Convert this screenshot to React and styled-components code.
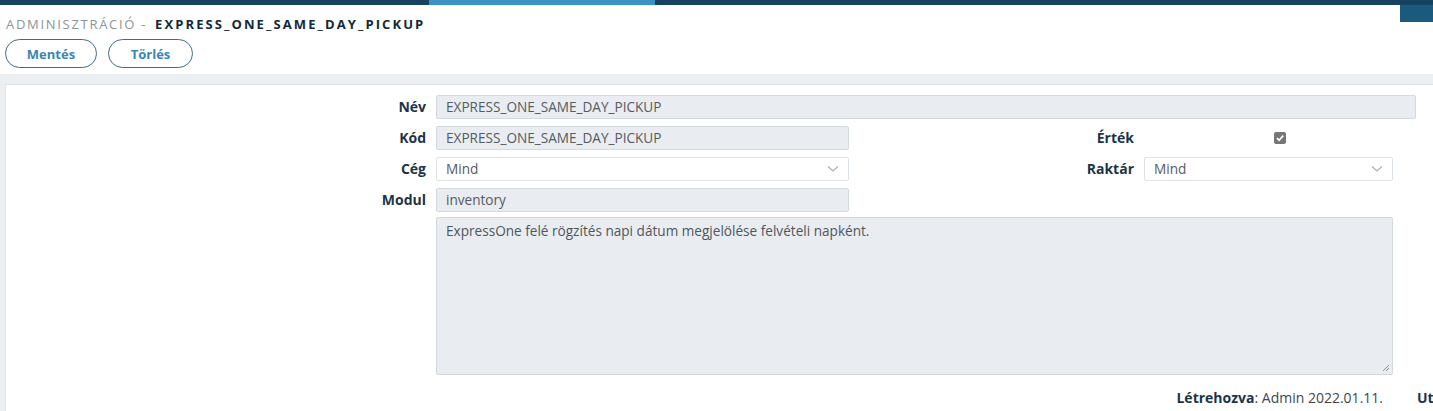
import React from 'react';
import styled, { createGlobalStyle } from 'styled-components';

const GlobalStyle = createGlobalStyle`
  html, body {
    margin: 0;
    padding: 0;
    background: #ffffff;
    overflow: hidden;
  }
  body {
    font-family: 'Open Sans', 'Noto Sans', sans-serif;
    color: #1d3447;
  }
`;

const Page = styled.div`
  position: relative;
  width: 1433px;
  height: 411px;
  overflow: hidden;
`;

const TopBar = styled.div`
  height: 5px;
  background: #15435f;
  display: flex;
`;

const TopBarActive = styled.div`
  margin-left: 429px;
  width: 226px;
  background: #3a93c3;
`;

// little block sitting in the right corner under the bar
const CornerTab = styled.div`
  position: absolute;
  top: 5px;
  right: 0;
  width: 33px;
  height: 17px;
  background: #1b5a7f;
`;

const Header = styled.div`
  padding: 11px 5px 6px 5px;
`;

const Title = styled.div`
  font-size: 13px;
  line-height: 16px;
  display: flex;
  align-items: baseline;
  padding-left: 1px;
`;

const TitleSection = styled.span`
  color: #8b949b;
  letter-spacing: 1.7px;
  margin-right: 8px;
`;

const TitleName = styled.span`
  color: #12293a;
  font-weight: 700;
  letter-spacing: 2.1px;
`;

const Toolbar = styled.div`
  display: flex;
  gap: 11px;
  margin-top: 7px;
`;

const PillButton = styled.button`
  height: 29px;
  width: ${(p) => p.$width}px;
  border: 1px solid #3f6c82;
  border-radius: 15px;
  background: #ffffff;
  color: #3a86b4;
  font-family: 'Open Sans', sans-serif;
  font-weight: 700;
  font-size: 13px;
  padding: 0;
  cursor: pointer;
`;

const Content = styled.div`
  background: #eceff2;
  padding: 10px 0 0 5px;
  height: 100%;
`;

const Panel = styled.div`
  background: #ffffff;
  border: 1px solid #dfe4e8;
  border-right: none;
  padding: 10px 0 0 0;
  height: 330px;
`;

const FormGrid = styled.div`
  display: grid;
  grid-template-columns: 420px 413px 275px 249px 13px;
  column-gap: 10px;
  row-gap: 7px;
  align-items: center;
`;

const Label = styled.label`
  grid-column: ${(p) => p.$col || 1};
  grid-row: ${(p) => p.$row};
  text-align: right;
  font-size: 14px;
  font-weight: 700;
  color: #1d3447;
  line-height: 24px;
`;

const Field = styled.div`
  grid-column: ${(p) => p.$span};
  grid-row: ${(p) => p.$row};
  height: 24px;
  box-sizing: border-box;
  border: 1px solid ${(p) => (p.$select ? '#dde2e6' : '#d3d9de')};
  border-radius: 2px;
  background: ${(p) => (p.$select ? '#ffffff' : '#e9edf1')};
  color: #555b61;
  font-size: 13.6px;
  line-height: 22px;
  padding: 0 9px;
  display: flex;
  align-items: center;
  justify-content: space-between;
  white-space: nowrap;
`;

const TextArea = styled.div`
  grid-column: 2 / 5;
  grid-row: 5;
  margin-top: -2px;
  height: 158px;
  box-sizing: border-box;
  border: 1px solid #d3d9de;
  border-radius: 2px;
  background: #e9edf1;
  color: #4f565c;
  font-size: 13.6px;
  line-height: 20px;
  padding: 3px 9px;
  position: relative;
`;

const Grip = styled.svg`
  position: absolute;
  right: 2px;
  bottom: 2px;
`;

const CheckCell = styled.div`
  grid-column: 4;
  grid-row: 2;
  display: flex;
  align-items: center;
  padding-left: 130px;
`;

const CheckBox = styled.span`
  width: 12px;
  height: 12px;
  border-radius: 2px;
  background: #767676;
  display: flex;
  align-items: center;
  justify-content: center;
`;

const Footer = styled.div`
  grid-column: 2 / 6;
  grid-row: 6;
  display: flex;
  justify-content: flex-end;
  gap: 34px;
  margin-top: 6px;
  font-size: 14px;
  color: #3f474e;
  white-space: nowrap;
  margin-right: -17px;
`;

const Meta = styled.span`
  b {
    color: #1d3447;
  }
`;

const MetaClipped = styled.span`
  width: 16px;
  overflow: visible;
  b {
    color: #1d3447;
  }
`;

const Chevron = () => (
  <svg width="12" height="8" viewBox="0 0 12 8">
    <path d="M1 1.5 L6 6 L11 1.5" fill="none" stroke="#a8b3bc" strokeWidth="1.3" />
  </svg>
);

export default function App() {
  return (
    <Page>
      <GlobalStyle />
      <TopBar>
        <TopBarActive />
      </TopBar>
      <CornerTab />
      <Header>
        <Title>
          <TitleSection>ADMINISZTRÁCIÓ -</TitleSection>
          <TitleName>EXPRESS_ONE_SAME_DAY_PICKUP</TitleName>
        </Title>
        <Toolbar>
          <PillButton $width={92}>Mentés</PillButton>
          <PillButton $width={85}>Törlés</PillButton>
        </Toolbar>
      </Header>
      <Content>
        <Panel>
          <FormGrid>
            <Label $row={1}>Név</Label>
            <Field $row={1} $span="2 / 6">EXPRESS_ONE_SAME_DAY_PICKUP</Field>

            <Label $row={2}>Kód</Label>
            <Field $row={2} $span="2">EXPRESS_ONE_SAME_DAY_PICKUP</Field>
            <Label $row={2} $col={3}>Érték</Label>
            <CheckCell>
              <CheckBox>
                <svg width="10" height="10" viewBox="0 0 10 10">
                  <path d="M2 5.2 L4.1 7.3 L8.2 2.6" fill="none" stroke="#ffffff" strokeWidth="1.7" />
                </svg>
              </CheckBox>
            </CheckCell>

            <Label $row={3}>Cég</Label>
            <Field $row={3} $span="2" $select>
              Mind
              <Chevron />
            </Field>
            <Label $row={3} $col={3}>Raktár</Label>
            <Field $row={3} $span="4" $select>
              Mind
              <Chevron />
            </Field>

            <Label $row={4}>Modul</Label>
            <Field $row={4} $span="2">inventory</Field>

            <TextArea>
              ExpressOne felé rögzítés napi dátum megjelölése felvételi napként.
              <Grip width="9" height="9" viewBox="0 0 9 9">
                <path d="M8 2 L2 8 M8 5 L5 8" stroke="#8a8f94" strokeWidth="1" />
              </Grip>
            </TextArea>

            <Footer>
              <Meta>
                <b>Létrehozva</b>: Admin 2022.01.11.
              </Meta>
              <MetaClipped>
                <b>Utolsó módosítás</b>: Admin 2022.01.11.
              </MetaClipped>
            </Footer>
          </FormGrid>
        </Panel>
      </Content>
    </Page>
  );
}
